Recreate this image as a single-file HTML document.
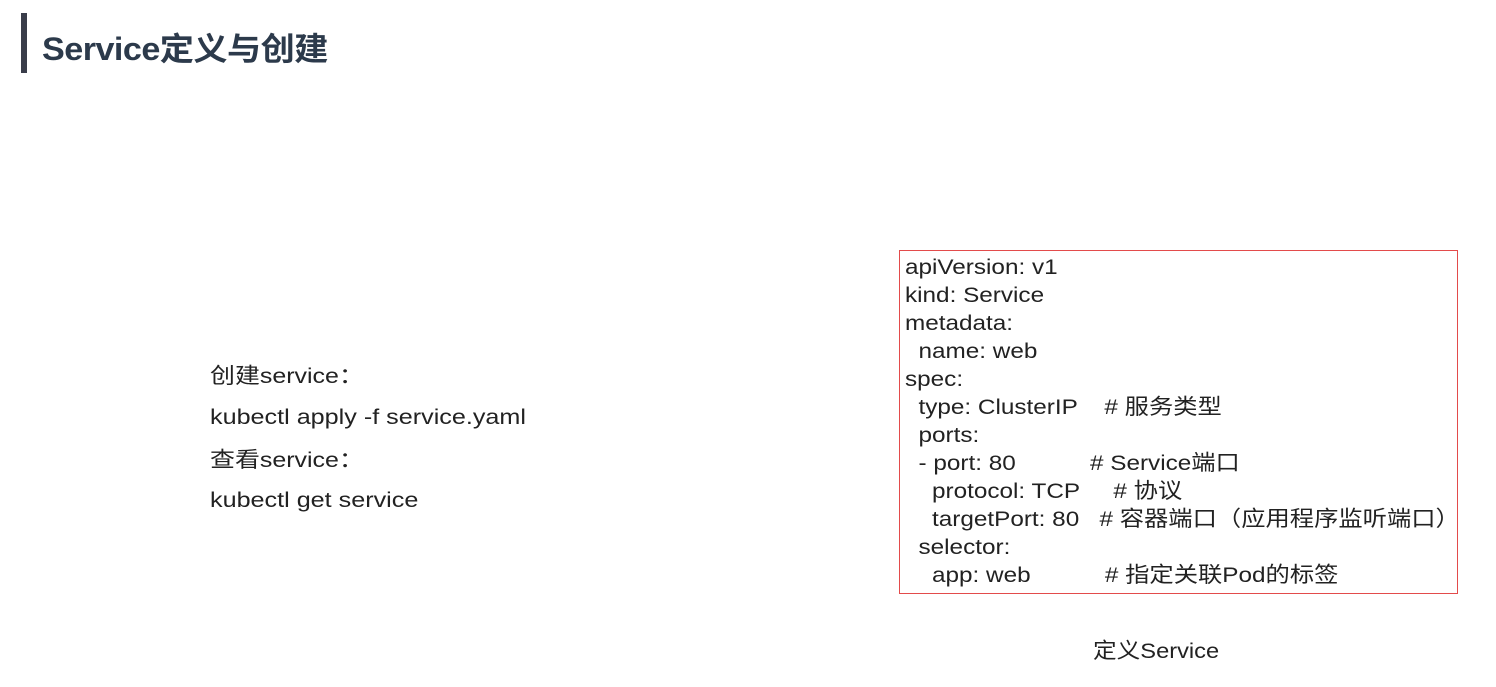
<!DOCTYPE html>
<html><head><meta charset="utf-8"><style>
body{margin:0;width:1496px;height:687px;background:#fff;position:relative;overflow:hidden;font-family:"Liberation Sans","Noto Sans CJK SC",sans-serif;color:#222;}
.bar{position:absolute;left:21px;top:13px;width:6px;height:60px;background:#3a3d4a;}
.t{position:absolute;left:42px;top:24px;font-size:32px;font-weight:bold;color:#2c3a4b;letter-spacing:-0.5px;transform:scaleX(1.067);transform-origin:0 0;}
.l{position:absolute;white-space:pre;font-size:21.5px;line-height:28px;transform-origin:0 0;}
.box{position:absolute;left:899px;top:250px;width:557px;height:342px;border:1px solid #e34b4b;}
</style></head><body>
<div class="bar"></div>
<div class="t">Service定义与创建</div>
<div class="l" style="left:210px;top:362px;transform:scaleX(1.16)">创建service：</div>
<div class="l" style="left:210px;top:403px;transform:scaleX(1.17)">kubectl apply -f service.yaml</div>
<div class="l" style="left:210px;top:446px;transform:scaleX(1.16)">查看service：</div>
<div class="l" style="left:210px;top:486px;transform:scaleX(1.17)">kubectl get service</div>
<div class="box"></div>
<div class="l" style="left:905px;top:253px;transform:scaleX(1.13)">apiVersion: v1
kind: Service
metadata:
  name: web
spec:
  type: ClusterIP    # 服务类型
  ports:
  - port: 80           # Service端口
    protocol: TCP     # 协议
    targetPort: 80   # 容器端口（应用程序监听端口）
  selector:
    app: web           # 指定关联Pod的标签</div>
<div class="l" style="left:1093px;top:637px;transform:scaleX(1.1)">定义Service</div>
</body></html>
